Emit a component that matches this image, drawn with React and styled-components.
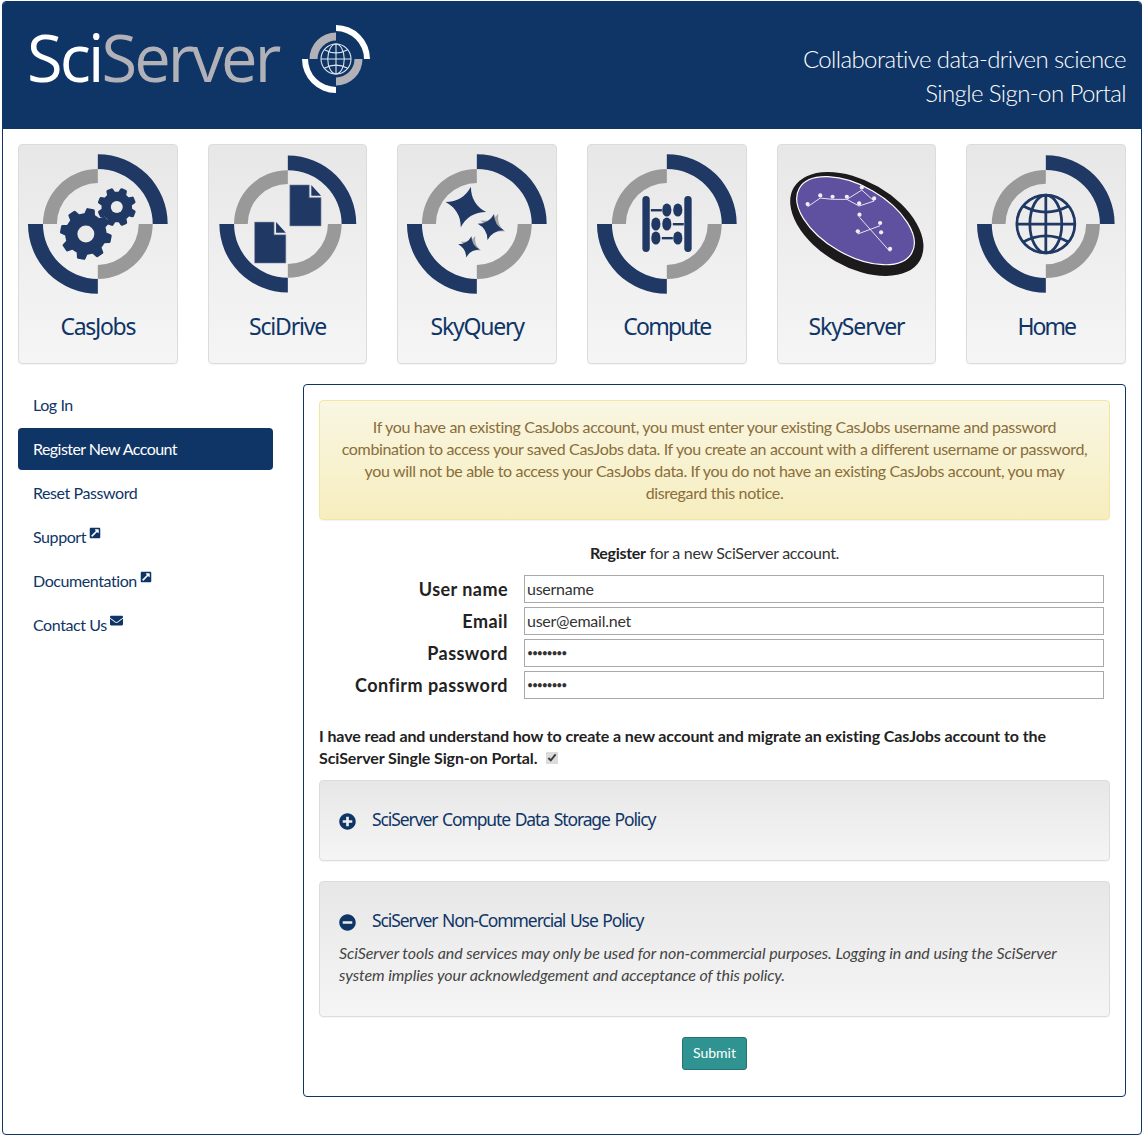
import React from "react";
import styled, { createGlobalStyle } from "styled-components";
import { FaExternalLinkSquareAlt, FaEnvelope, FaPlusCircle, FaMinusCircle } from "react-icons/fa";

const NAVY = "#0f3566";
const ICON = "#203864";
const GREY = "#999999";

const Global = createGlobalStyle`
  html, body { margin: 0; padding: 0; background: #fff; }
  body { font-family: Lato, "Open Sans", sans-serif; font-size: 16px; line-height: 22px; color: #333; }
  * { box-sizing: border-box; }
`;

const Page = styled.div`
  margin: 1px 0 0 2px; width: 1140px; height: 1134px;
  border: 1px solid ${NAVY}; border-radius: 4px; overflow: hidden;
`;
const Header = styled.header`
  height: 128px; margin: -1px -1px 0; background: ${NAVY};
  display: flex; justify-content: space-between; padding: 0 16px 0 25px;
`;
const Brand = styled.div`display: flex; align-items: flex-start; padding-top: 23px;`;
const Wordmark = styled.div`
  font-family: "Open Sans", sans-serif; font-size: 65px; font-weight: 500; line-height: 68px; letter-spacing: -2.9px; color: #b1b1b7;
  width: 274px; margin-top: -1px;
  span { color: #fff; }
`;
const Tagline = styled.div`
  text-align: right; color: #ffffff; font-size: 24px; font-weight: 300; line-height: 34px;
  padding-top: 41px; letter-spacing: -0.6px;
`;
const Body = styled.div`padding: 15px 15px 0;`;
const TileRow = styled.div`display: grid; grid-template-columns: repeat(6, minmax(0, 1fr)); gap: 30px;`;
const Tile = styled.a`
  height: 220px; border: 1px solid #dcdcdc; border-radius: 4px;
  background: linear-gradient(#e7e7e7, #f0f0f0 60%, #f5f5f5);
  display: flex; flex-direction: column; align-items: center;
  box-shadow: 0 1px 1px rgba(0,0,0,.04);
`;
const TileIcon = styled.svg`width: 157.67px; height: 159px; flex: none;`;
const TileLabel = styled.div`
  margin-top: 9px; font-family: "Noto Sans", sans-serif; font-size: 23px; line-height: 26px;
  letter-spacing: ${(p) => p.$ls}px; color: ${NAVY};
`;
const Columns = styled.div`display: grid; grid-template-columns: 255px minmax(0, 1fr); gap: 30px; margin-top: 20px;`;
const Side = styled.nav`display: flex; flex-direction: column; gap: 2px;`;
const SideLink = styled.a`
  height: 42px; border-radius: 4px; padding: 0 15px; display: flex; align-items: center;
  letter-spacing: ${(p) => (p.$active ? "-0.55px" : "-0.42px")}; color: ${(p) => (p.$active ? "#fff" : NAVY)};
  background: ${(p) => (p.$active ? NAVY : "transparent")};
`;
const Sup = styled.span`
  display: inline-flex; margin: -9px 0 0 3px; color: ${NAVY};
  svg { display: block; width: ${(p) => p.$w || 12}px; height: ${(p) => p.$w || 12}px; }
`;
const Panel = styled.main`
  height: 713px; border: 1px solid ${NAVY}; border-radius: 4px; padding: 15px;
  display: flex; flex-direction: column;
`;
const Notice = styled.div`
  height: 120px; padding: 15px 20px; border: 1px solid #f3e6a2; border-radius: 4px; text-align: center;
  background: linear-gradient(#f9f6e2, #f6eebf); color: #8a6d3b; letter-spacing: -0.34px;
  box-shadow: 0 1px 1px rgba(0,0,0,.05);
`;
const Lead = styled.p`margin: 22px 0 11px; text-align: center; color: #333; letter-spacing: -0.3px; b { color: #222; }`;
const Form = styled.div`
  display: grid; grid-template-columns: 189px 580px; column-gap: 16px; row-gap: 4px;
`;
const FieldLabel = styled.label`
  text-align: right; font-weight: 700; font-size: 18px; line-height: 28px; color: #222; letter-spacing: 0.45px;
`;
const Field = styled.input`
  height: 28px; width: 100%; border: 1px solid #a9a9a9; padding: 0 2px 2px; border-radius: 0; outline: none;
  font-family: Lato, sans-serif; font-size: 16px; color: #333; letter-spacing: -0.25px; background: #fff;
  &[type="password"] { font-size: 10.5px; letter-spacing: -1.2px; padding-bottom: 0; }
`;
const Consent = styled.p`
  margin: 26px 0 11px; font-weight: 700; color: #222; letter-spacing: -0.1px;
`;
const Tick = styled.input`width: 12px; height: 12px; margin: 0 0 0 9px; vertical-align: 0; accent-color: #dcdcdc;`;
const Well = styled.section`
  height: ${(p) => p.$h}px; margin-bottom: 20px; padding: 27px 19px 0; border: 1px solid #dcdcdc; border-radius: 4px;
  background: linear-gradient(#e7e7e7, #f5f5f5); box-shadow: 0 1px 1px rgba(0,0,0,.04);
`;
const WellTitle = styled.div`
  display: flex; align-items: center; gap: 16px; height: 22px; color: ${NAVY};
  font-family: "Noto Sans", sans-serif; font-size: 17.5px; letter-spacing: -1.1px; word-spacing: 1.2px;
  svg { width: 17px; height: 17px; flex: none; margin-top: 4px; }
`;
const WellText = styled.p`margin: 11px 0 0; font-style: italic; color: #444; letter-spacing: -0.08px;`;
const Submit = styled.button`
  align-self: center; width: 65px; height: 33px; border: 1px solid #217471; border-radius: 3px;
  background: #2f9491; color: #fff; font-family: Lato, sans-serif; font-size: 14px; padding: 0 0 2px;
`;

const arc = (r, a0, a1) => {
  const p = (a) => [r * Math.cos((a * Math.PI) / 180), r * Math.sin((a * Math.PI) / 180)];
  const [x0, y0] = p(a0);
  const [x1, y1] = p(a1);
  return { x0, y0, x1, y1 };
};
const sector = (R, r, a0, a1) => {
  const o = arc(R, a0, a1);
  const i = arc(r, a0, a1);
  return `M${o.x0} ${o.y0}A${R} ${R} 0 0 1 ${o.x1} ${o.y1}L${i.x1} ${i.y1}A${r} ${r} 0 0 0 ${i.x0} ${i.y0}Z`;
};
const Ring = ({ outer = ICON, inner = GREY, R = 70, m = 55, r = 41, g = 55 }) => (
  <g>
    <path d={sector(R, m, -90, 0)} fill={outer} />
    <path d={sector(R, m, 90, 180)} fill={outer} />
    <path d={sector(g, r, 180, 270)} fill={inner} />
    <path d={sector(g, r, 0, 90)} fill={inner} />
  </g>
);

const Globe = ({ r, color, w }) => (
  <g fill="none" stroke={color} strokeWidth={w}>
    <circle r={r} />
    <ellipse rx={r * 0.55} ry={r} />
    <line y1={-r} y2={r} />
    <line x1={-r} x2={r} />
    <path d={`M${-r * 0.78} ${-r * 0.62}Q0 ${-r * 0.2} ${r * 0.78} ${-r * 0.62}`} />
    <path d={`M${-r * 0.78} ${r * 0.62}Q0 ${r * 0.2} ${r * 0.78} ${r * 0.62}`} />
  </g>
);

const gearPath = (R, root, teeth, rot = 0) => {
  const pts = [];
  const step = 360 / teeth;
  for (let i = 0; i < teeth; i++) {
    const c = rot + i * step;
    [[-0.27, root], [-0.15, R], [0.15, R], [0.27, root]].forEach(([f, rad]) => {
      const a = ((c + f * step) * Math.PI) / 180;
      pts.push(`${(rad * Math.cos(a)).toFixed(2)} ${(rad * Math.sin(a)).toFixed(2)}`);
    });
  }
  return `M${pts.join("L")}Z`;
};
const Gear = ({ x, y, R, root, hole, rot }) => (
  <g transform={`translate(${x} ${y})`}>
    <path d={gearPath(R - 1.5, root - 1.5, 8, rot)} fill={ICON} stroke={ICON} strokeWidth="3" strokeLinejoin="round" />
    <circle r={hole} fill="#ebebeb" />
  </g>
);

const Doc = ({ x, y }) => (
  <g transform={`translate(${x} ${y})`}>
    <path d="M0 0H20V13H32V42H0Z" fill={ICON} stroke="#8e97ac" strokeWidth=".6" />
    <path d="M22 0L32 11H22Z" fill={ICON} />
  </g>
);

const starPath = (R) => {
  const k = R * 0.2;
  return `M0 ${-R}Q${k} ${-k} ${R} 0Q${k} ${k} 0 ${R}Q${-k} ${k} ${-R} 0Q${-k} ${-k} 0 ${-R}Z`;
};
const Star = ({ x, y, R, rot, shadow }) => (
  <g transform={`translate(${x} ${y})`}>
    {shadow && <path d={starPath(R)} fill="#8a8a8a" opacity=".7" transform={`translate(2 -1) rotate(${rot + 10})`} />}
    <path d={starPath(R)} fill={ICON} transform={`rotate(${rot})`} />
  </g>
);

const Bead = ({ x, y }) => <ellipse cx={x} cy={y} rx="4.6" ry="6.6" fill={ICON} />;
const Abacus = () => (
  <g fill={ICON}>
    <rect x="-24.5" y="-28" width="7.4" height="56" rx="3.7" />
    <rect x="17.5" y="-28" width="7.4" height="56" rx="3.7" />
    <rect x="-16" y="-15" width="11" height="2.4" />
    <rect x="6" y="-1" width="11" height="2.4" />
    <rect x="-5" y="13" width="11" height="2.4" />
    <Bead x="0" y="-14" /><Bead x="11" y="-14" />
    <Bead x="-11" y="0" /><Bead x="0" y="0" />
    <Bead x="-11" y="14" /><Bead x="11" y="14" />
  </g>
);

const dots = [[112,200],[150,174],[187,178],[230,178],[267,198],[312,183],[275,150],[268,232],[360,335],[263,282],[330,257],[333,285]];
const z = (v) => (v - 260) / 3;
const SkyLogo = () => (
  <g>
    <ellipse rx="73" ry="43" transform="rotate(30)" fill="#1d1a1b" />
    <ellipse cx="-1.3" cy="-3.3" rx="65" ry="34.5" transform="rotate(30 -1.3 -3.3)" fill="#5f50a0" stroke="#fff" strokeWidth="1.2" />
    <path
      d="M-49.3 -17.3L-36.7 -26L-24.3 -24.7L-10 -24.7L2.3 -18L17.3 -23L5 -34L-10 -24.7M2.7 -6.7L33.3 27.7M1 10L23.3 1.7"
      fill="none" stroke="#e6e4f2" strokeWidth="1"
    />
    {dots.map(([x, y]) => (
      <circle key={`${x}-${y}`} cx={z(x)} cy={z(y)} r="2.1" fill="#f0eff8" />
    ))}
  </g>
);

const Vb = "-79 -79 158 159";
const tiles = [
  { name: "CasJobs", ls: -1.3, art: <><Ring /><Gear x={-12} y={10} R={26} root={21} hole={8.5} rot={11} /><Gear x={19} y={-17} R={19.5} root={15.5} hole={6} rot={22} /></> },
  { name: "SciDrive", ls: -1.2, art: <g transform="scale(.98)"><Ring /><Doc x={2} y={-40} /><Doc x={-34} y={-2} /></g> },
  { name: "SkyQuery", ls: -1.2, art: <><Ring /><Star x={-11} y={-17} R={21} rot={14} /><Star x={14} y={3} R={13.5} rot={14} shadow /><Star x={-8} y={23} R={11} rot={14} shadow /></> },
  { name: "Compute", ls: -1.8, art: <><Ring /><Abacus /></> },
  { name: "SkyServer", ls: -1.1, art: <SkyLogo /> },
  { name: "Home", ls: -2, art: <g transform="scale(.985)"><Ring /><Globe r={29.5} color={ICON} w={2.8} /></g> },
];

export default function App() {
  return (
    <>
      <Global />
      <Page>
        <Header>
          <Brand>
            <Wordmark><span>Sci</span>Server</Wordmark>
            <svg width="70" height="70" viewBox="-35 -35 70 70">
              <Ring outer="#fff" inner="#b1b1b7" R={34} m={28} g={26.5} r={18.5} />
              <Globe r={15} color="#dfe5ee" w={1.1} />
            </svg>
          </Brand>
          <Tagline>Collaborative data-driven science<br />Single Sign-on Portal</Tagline>
        </Header>
        <Body>
          <TileRow>
            {tiles.map((t) => (
              <Tile key={t.name}>
                <TileIcon viewBox={Vb}>{t.art}</TileIcon>
                <TileLabel $ls={t.ls}>{t.name}</TileLabel>
              </Tile>
            ))}
          </TileRow>
          <Columns>
            <Side>
              <SideLink>Log In</SideLink>
              <SideLink $active>Register New Account</SideLink>
              <SideLink>Reset Password</SideLink>
              <SideLink>Support<Sup><FaExternalLinkSquareAlt /></Sup></SideLink>
              <SideLink>Documentation<Sup><FaExternalLinkSquareAlt /></Sup></SideLink>
              <SideLink>Contact Us<Sup $w={13}><FaEnvelope /></Sup></SideLink>
            </Side>
            <Panel>
              <Notice>
                If you have an existing CasJobs account, you must enter your existing CasJobs username and password combination to access your saved CasJobs data. If you create an account with a different username or password, you will not be able to access your CasJobs data. If you do not have an existing CasJobs account, you may disregard this notice.
              </Notice>
              <Lead><b>Register</b> for a new SciServer account.</Lead>
              <Form>
                <FieldLabel>User name</FieldLabel>
                <Field readOnly value="username" />
                <FieldLabel>Email</FieldLabel>
                <Field readOnly value="user@email.net" />
                <FieldLabel>Password</FieldLabel>
                <Field readOnly type="password" value="password" />
                <FieldLabel>Confirm password</FieldLabel>
                <Field readOnly type="password" value="password" />
              </Form>
              <Consent>
                I have read and understand how to create a new account and migrate an existing CasJobs account to the SciServer Single Sign-on Portal.
                <Tick type="checkbox" checked readOnly />
              </Consent>
              <Well $h={81}>
                <WellTitle><FaPlusCircle />SciServer Compute Data Storage Policy</WellTitle>
              </Well>
              <Well $h={136}>
                <WellTitle><FaMinusCircle />SciServer Non-Commercial Use Policy</WellTitle>
                <WellText>SciServer tools and services may only be used for non-commercial purposes. Logging in and using the SciServer system implies your acknowledgement and acceptance of this policy.</WellText>
              </Well>
              <Submit>Submit</Submit>
            </Panel>
          </Columns>
        </Body>
      </Page>
    </>
  );
}
